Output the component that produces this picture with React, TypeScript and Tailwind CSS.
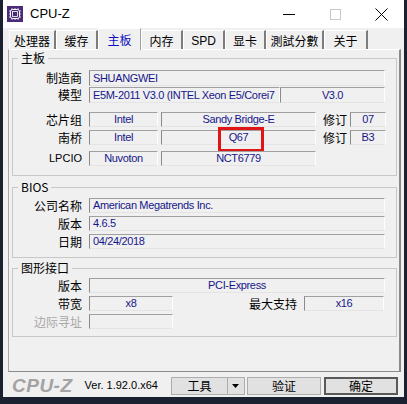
import type { ReactNode } from 'react';

const LATIN = "font-['Liberation_Sans',sans-serif]";
const CJK = "font-['Noto_Sans_CJK_SC','Liberation_Sans',sans-serif]";

function Field({ w, children, className = '', h = 'h-[16px]' }: { w: string; children?: ReactNode; className?: string; h?: string }) {
  return (
    <div
      className={`${w} ${h} relative flex items-center justify-center whitespace-nowrap border-t border-l border-t-[#a0a0a0] border-l-[#8a8a8a] border-r border-b border-r-[#fdfdfd] border-b-[#e4e4e4] bg-[#f0f0f0] text-[11px] leading-none tracking-[-0.35px] text-[#16168a] ${LATIN} ${className}`}
    >
      {children}
    </div>
  );
}

function Label({ children, muted = false }: { children: ReactNode; muted?: boolean }) {
  return (
    <div className={`w-[76px] shrink-0 pr-[7px] text-right text-[12px] leading-none ${muted ? 'text-[#a8a8a8]' : 'text-black'} ${CJK}`}>
      {children}
    </div>
  );
}

function Group({ title, children, className = '' }: { title: string; children: ReactNode; className?: string }) {
  return (
    <fieldset className={`ml-[3px] w-[385px] border border-[#c8c8c8] ${className}`}>
      <legend className={`ml-[5px] px-[3px] text-[12px] leading-[14px] text-black ${CJK}`}>{title}</legend>
      {children}
    </fieldset>
  );
}

const tabs = ['处理器', '缓存', '主板', '内存', 'SPD', '显卡', '測試分數', '关于'];
const tabWidths = ['w-[47px]', 'w-[42px]', 'w-[43px]', 'w-[42px]', 'w-[42px]', 'w-[41px]', 'w-[58px]', 'w-[44px]'];

export default function App() {
  return (
    <div className="flex h-[404px] w-[407px] bg-[#1c2131]">
      <div className="ml-[3px] flex h-[397px] w-[401px] flex-col bg-[#f0f0f0]">
        {/* Title bar */}
        <div className="flex h-[28px] shrink-0 items-center bg-white">
          <svg className="ml-[4px] h-[16px] w-[16px]" viewBox="0 0 16 16">
            <rect width="16" height="16" fill="#4a2a7a" />
            <rect x="3.5" y="3.5" width="9" height="9" rx="2" fill="none" stroke="#fff" strokeWidth="1" />
            <rect x="5.5" y="5.5" width="5" height="5" fill="none" stroke="#fff" strokeWidth="0.8" />
            <path d="M5 2v1.5M8 2v1.5M11 2v1.5M5 12.5V14M8 12.5V14M11 12.5V14M2 5h1.5M2 8h1.5M2 11h1.5M12.5 5H14M12.5 8H14M12.5 11H14" stroke="#fff" strokeWidth="0.8" />
          </svg>
          <span className={`ml-[7px] text-[13px] text-black ${LATIN}`}>CPU-Z</span>
          <div className="ml-auto flex items-center">
            <div className="flex h-[28px] w-[46px] items-center justify-center">
              <div className="h-px w-[12px] bg-black" />
            </div>
            <div className="flex h-[28px] w-[46px] items-center justify-center">
              <div className="h-[11px] w-[11px] border border-[#c8c8c8]" />
            </div>
            <div className="flex h-[28px] w-[46px] items-center justify-center">
              <svg width="13" height="13" viewBox="0 0 13 13">
                <path d="M0.5 0.5L12.5 12.5M12.5 0.5L0.5 12.5" stroke="#000" strokeWidth="1" />
              </svg>
            </div>
          </div>
        </div>

        {/* Tabs */}
        <div className="ml-[6px] flex h-[22px] shrink-0 items-end">
          {tabs.map((t, i) => {
            const active = t === '主板';
            return (
              <div
                key={t}
                className={`${tabWidths[i]} flex items-center justify-center text-[12px] leading-none ${
                  t === 'SPD' ? LATIN : CJK
                } ${
                  active
                    ? 'relative z-10 h-[22px] border-t border-l border-r border-t-white border-l-white border-r-[#a0a0a0] bg-[#f0f0f0] text-[#1010c0]'
                    : 'h-[20px] border-t border-l border-t-white border-l-white border-r-2 border-r-[#7c7c7c] text-black'
                } ${t === 'SPD' ? 'text-[11px]' : ''}`}
              >
                {t}
              </div>
            );
          })}
        </div>

        {/* Panel */}
        <div className="-mt-px ml-[5px] h-[323px] w-[393px] shrink-0 border-t border-l border-t-[#ffffff] border-l-[#a8a8a8] border-r-2 border-b border-r-[#8a8a8a] border-b-[#8a8a8a]">
          <Group title="主板" className="mt-px h-[125px]">
            <div className="mt-[5px] flex flex-col">
              <div className="flex items-center">
                <Label>制造商</Label>
                <Field w="w-[296px]" className="justify-start pl-[3px]">SHUANGWEI</Field>
              </div>
              <div className="mt-[1px] flex items-center">
                <Label>模型</Label>
                <Field w="w-[191px]" className="justify-start overflow-hidden pl-[3px]">E5M-2011 V3.0 (INTEL Xeon E5/Corei7</Field>
                <Field w="w-[105px]">V3.0</Field>
              </div>
              <div className="mt-[9px] flex items-center">
                <Label>芯片组</Label>
                <Field w="w-[69px]" h="h-[15px]">Intel</Field>
                <Field w="w-[155px]" h="h-[15px]" className="ml-[3px]">Sandy Bridge-E</Field>
                <div className={`ml-[7px] w-[26px] text-[12px] leading-none ${CJK}`}>修订</div>
                <Field w="w-[36px]" h="h-[15px]" className="ml-[1px]">07</Field>
              </div>
              <div className="mt-[3px] flex items-center">
                <Label>南桥</Label>
                <Field w="w-[69px]" h="h-[15px]">Intel</Field>
                <Field w="w-[155px]" h="h-[15px]" className="ml-[3px]">
                  Q67
                  <div className="absolute left-[56px] top-[-4px] h-[25px] w-[46px] border-[3px] border-[#e01616]" />
                </Field>
                <div className={`ml-[7px] w-[26px] text-[12px] leading-none ${CJK}`}>修订</div>
                <Field w="w-[36px]" h="h-[15px]" className="ml-[1px]">B3</Field>
              </div>
              <div className="mt-[6px] flex items-center">
                <div className={`w-[76px] shrink-0 pr-[7px] text-right text-[11px] leading-none text-black ${LATIN}`}>LPCIO</div>
                <Field w="w-[69px]" h="h-[15px]">Nuvoton</Field>
                <Field w="w-[155px]" h="h-[15px]" className="ml-[3px]">NCT6779</Field>
              </div>
            </div>
          </Group>

          <Group title="BIOS" className="mt-[4px] h-[78px]">
            <div className="mt-[4px] flex flex-col gap-[3px]">
              <div className="flex items-center">
                <Label>公司名称</Label>
                <Field w="w-[296px]" h="h-[15px]" className="justify-start pl-[3px]">American Megatrends Inc.</Field>
              </div>
              <div className="flex items-center">
                <Label>版本</Label>
                <Field w="w-[296px]" h="h-[15px]" className="justify-start pl-[3px]">4.6.5</Field>
              </div>
              <div className="flex items-center">
                <Label>日期</Label>
                <Field w="w-[296px]" h="h-[15px]" className="justify-start pl-[3px]">04/24/2018</Field>
              </div>
            </div>
          </Group>

          <Group title="图形接口" className="mt-[3px] h-[76px]">
            <div className="mt-[3px] flex flex-col gap-[3px]">
              <div className="flex items-center">
                <Label>版本</Label>
                <Field w="w-[296px]" h="h-[15px]">PCI-Express</Field>
              </div>
              <div className="flex items-center">
                <Label>带宽</Label>
                <Field w="w-[84px]" h="h-[15px]">x8</Field>
                <div className={`ml-auto w-[60px] text-right text-[12px] leading-none ${CJK}`}>最大支持</div>
                <Field w="w-[80px]" h="h-[15px]" className="ml-[7px] mr-[12px]">x16</Field>
              </div>
              <div className="flex items-center">
                <Label muted>边际寻址</Label>
                <Field w="w-[84px]" h="h-[15px]" />
              </div>
            </div>
          </Group>
        </div>

        {/* Bottom bar */}
        <div className="flex flex-1 items-center pt-[2px]">
          <span className={`ml-[9px] text-[19px] font-bold italic leading-none tracking-[0.5px] text-[#a3a3a3] ${LATIN}`}>CPU-Z</span>
          <span className={`ml-[12px] text-[11px] leading-none text-black ${LATIN}`}>Ver. 1.92.0.x64</span>
          <div className="ml-[13px] flex h-[18px]">
            <div className={`flex w-[57px] items-center justify-center border border-[#adadad] bg-[#e1e1e1] text-[12px] leading-none ${CJK}`}>工具</div>
            <div className="flex w-[17px] items-center justify-center border border-l-0 border-[#adadad] bg-[#e1e1e1]">
              <svg width="7" height="4" viewBox="0 0 7 4">
                <path d="M0 0h7L3.5 4z" fill="#000" />
              </svg>
            </div>
          </div>
          <div className={`ml-[2px] flex h-[18px] w-[74px] items-center justify-center border border-[#adadad] bg-[#e1e1e1] text-[12px] leading-none ${CJK}`}>验证</div>
          <div className={`ml-[3px] flex h-[18px] w-[74px] items-center justify-center border-2 border-[#5a5a5a] bg-[#e1e1e1] text-[12px] leading-none ${CJK}`}>确定</div>
        </div>
      </div>
    </div>
  );
}
